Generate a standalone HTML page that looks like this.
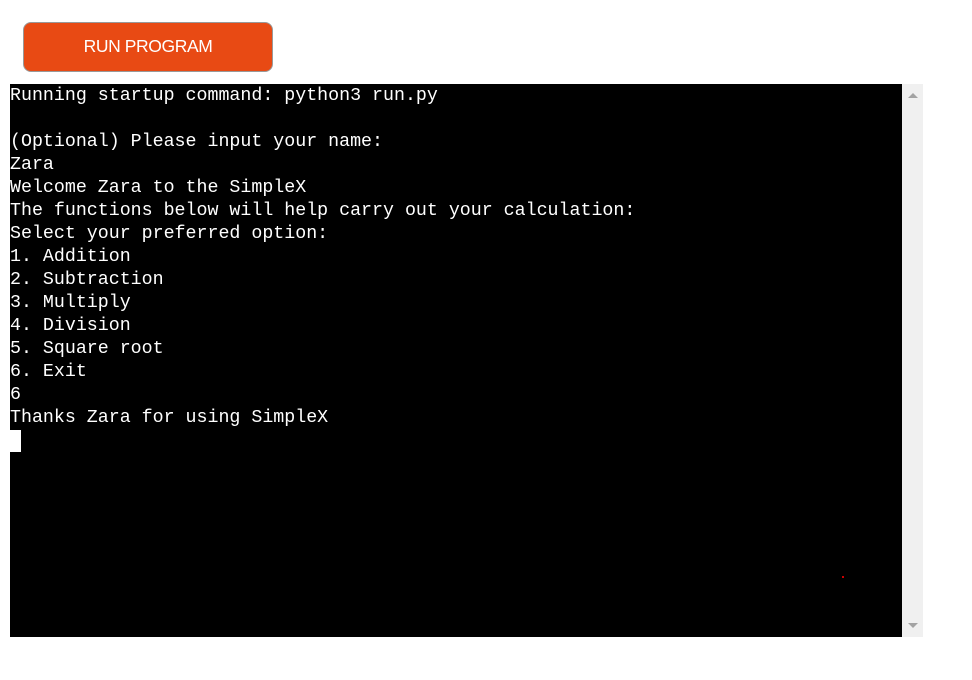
<!DOCTYPE html>
<html><head><style>
body{margin:0;background:#fff;width:972px;height:680px;position:relative;overflow:hidden}
.btn{position:absolute;left:23px;top:22px;width:248px;height:48px;background:#e84a14;border:1px solid #999;border-radius:8px;color:#fff;font:17.5px "Liberation Sans",sans-serif;letter-spacing:-0.4px;text-align:center;line-height:47px}
.term{position:absolute;left:10px;top:84px;width:892px;height:553px;background:#000}
pre{margin:0;padding-top:1px;color:#fff;font:18.3px/23px "Liberation Mono",monospace;white-space:pre}
.cur{display:inline-block;width:11px;height:22px;background:#fff;vertical-align:top}
.sb{position:absolute;left:902px;top:84px;width:21px;height:553px;background:#f0f0f0}
.up{position:absolute;left:6px;top:9px;border:5px solid transparent;border-bottom:5px solid #a3a3a3;border-top:0;width:0}
.dn{position:absolute;left:6px;bottom:9px;border:5px solid transparent;border-top:5px solid #a3a3a3;border-bottom:0;width:0}
.dot{position:absolute;left:842px;top:576px;width:2px;height:2px;background:#c00}
</style></head><body>
<div class="btn">RUN PROGRAM</div>
<div class="term"><pre>Running startup command: python3 run.py

(Optional) Please input your name:
Zara
Welcome Zara to the SimpleX
The functions below will help carry out your calculation:
Select your preferred option:
1. Addition
2. Subtraction
3. Multiply
4. Division
5. Square root
6. Exit
6
Thanks Zara for using SimpleX
<span class="cur"></span></pre></div>
<div class="dot"></div>
<div class="sb"><div class="up"></div><div class="dn"></div></div>
</body></html>
